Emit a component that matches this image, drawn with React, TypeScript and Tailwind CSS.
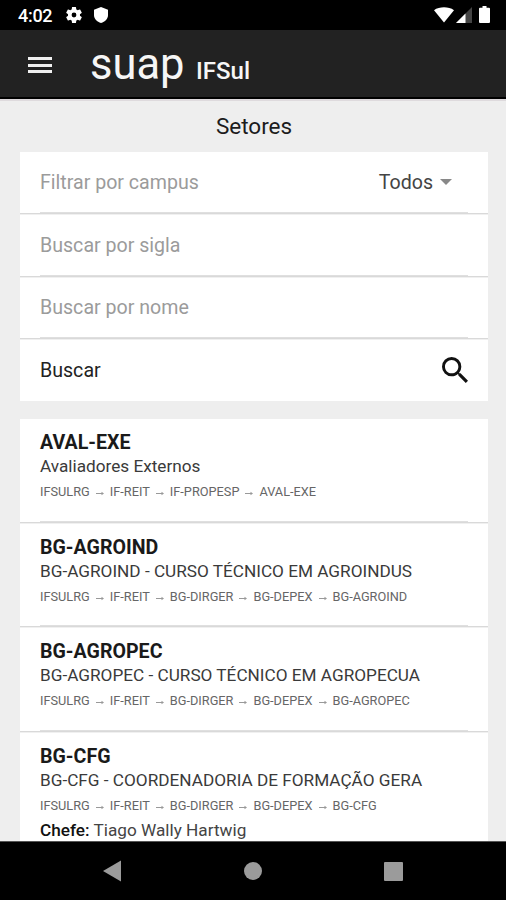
import type { ReactNode } from "react";

type Sector = {
  code: string;
  name: string;
  path: string[];
  chief?: string;
  height: string;
};

const sectors: Sector[] = [
  {
    code: "AVAL-EXE",
    name: "Avaliadores Externos",
    path: ["IFSULRG", "IF-REIT", "IF-PROPESP", "AVAL-EXE"],
    height: "h-[105px]",
  },
  {
    code: "BG-AGROIND",
    name: "BG-AGROIND - CURSO TÉCNICO EM AGROINDUS",
    path: ["IFSULRG", "IF-REIT", "BG-DIRGER", "BG-DEPEX", "BG-AGROIND"],
    height: "h-[104px]",
  },
  {
    code: "BG-AGROPEC",
    name: "BG-AGROPEC - CURSO TÉCNICO EM AGROPECUA",
    path: ["IFSULRG", "IF-REIT", "BG-DIRGER", "BG-DEPEX", "BG-AGROPEC"],
    height: "h-[105px]",
  },
  {
    code: "BG-CFG",
    name: "BG-CFG - COORDENADORIA DE FORMAÇÃO GERA",
    path: ["IFSULRG", "IF-REIT", "BG-DIRGER", "BG-DEPEX", "BG-CFG"],
    chief: "Tiago Wally Hartwig",
    height: "h-[130px]",
  },
];

function StatusBar() {
  return (
    <div className="flex h-[30px] shrink-0 items-center bg-black pr-[16px] pl-[18px] text-white">
      <span className="w-[48px] pt-[2px] text-[18px] leading-none font-medium tracking-[-0.3px]">4:02</span>
      <svg className="h-[16px] w-[16px]" viewBox="2 2 20 20" fill="#fff">
        <path d="M19.43 12.98c.04-.32.07-.64.07-.98s-.03-.66-.07-.98l2.11-1.65c.19-.15.24-.42.12-.64l-2-3.46c-.12-.22-.39-.3-.61-.22l-2.49 1c-.52-.4-1.08-.73-1.69-.98l-.38-2.65A.49.49 0 0 0 14 2h-4c-.25 0-.46.18-.49.42l-.38 2.65c-.61.25-1.17.59-1.69.98l-2.49-1c-.23-.09-.49 0-.61.22l-2 3.46c-.13.22-.07.49.12.64l2.11 1.65c-.04.32-.07.65-.07.98s.03.66.07.98l-2.11 1.65c-.19.15-.24.42-.12.64l2 3.46c.12.22.39.3.61.22l2.49-1c.52.4 1.08.73 1.69.98l.38 2.65c.03.24.24.42.49.42h4c.25 0 .46-.18.49-.42l.38-2.65c.61-.25 1.17-.59 1.69-.98l2.49 1c.23.09.49 0 .61-.22l2-3.46c.12-.22.07-.49-.12-.64l-2.11-1.65zM12 15a3 3 0 1 1 0-6 3 3 0 0 1 0 6z" />
      </svg>
      <svg className="ml-[12px] h-[16px] w-[14px]" viewBox="0 0 14 16" fill="#fff">
        <path d="M7 0 14 2.7V8c0 3.8-3 7-7 8-4-1-7-4.200-7-8V2.700z" />
      </svg>
      <svg className="ml-auto h-[16px] w-[20px]" viewBox="0 0 20 16" fill="#fff">
        <path d="M0 3.200C5.500-.6 14.500-.6 20 3.200L10 15.500z" />
      </svg>
      <svg className="ml-[2px] h-[16px] w-[16px]" viewBox="0 0 16 16">
        <path d="M16 0v16H0z" fill="#444" />
        <path d="M9.500 6.500V16H0z" fill="#fff" />
      </svg>
      <svg className="mb-px ml-[7px] h-[17px] w-[11px]" viewBox="0 0 11 17" fill="#fff">
        <path d="M3.500 0h4v1.800H10a1 1 0 0 1 1 1V16a1 1 0 0 1-1 1H1a1 1 0 0 1-1-1V2.800a1 1 0 0 1 1-1h2.500z" />
      </svg>
    </div>
  );
}

function AppBar() {
  return (
    <header className="flex h-[69px] shrink-0 border-b-2 border-black bg-[#222] text-[#f6f6f6]">
      <div className="mt-[27px] ml-[28px] flex h-[16px] w-[24px] flex-col justify-between">
        <span className="h-[3px] bg-[#f0f0f0]" />
        <span className="h-[3px] bg-[#f0f0f0]" />
        <span className="h-[3px] bg-[#f0f0f0]" />
      </div>
      <div className="ml-[38px] flex items-baseline whitespace-nowrap">
        <span className="w-[106px] text-[43.500px] leading-[69px]">suap</span>
        <span className="text-[24px] leading-none font-medium">IFSul</span>
      </div>
    </header>
  );
}

function Divider() {
  return (
    <div className="shrink-0">
      <div className="mx-5 h-px bg-[#dfdfdf]" />
      <div className="h-px bg-[#d9d9d9]" />
      <div className="h-px bg-[#f0f0f0]" />
    </div>
  );
}

function FilterRow({ height, children, last }: { height: string; children: ReactNode; last?: boolean }) {
  return (
    <div className={`flex flex-col ${height}`}>
      <div className="flex flex-1 items-center px-5 text-[19.600px] leading-none text-[#9b9b9b]">{children}</div>
      {!last && <Divider />}
    </div>
  );
}

function SectorRow({ sector, last }: { sector: Sector; last: boolean }) {
  return (
    <div className={`flex flex-col whitespace-nowrap ${sector.height}`}>
      <div className="flex-1 px-5 pt-[12px]">
        <h2 className="text-[19.600px] leading-[24px] font-bold text-[#1a1a1a]">{sector.code}</h2>
        <p className="text-[17.200px] leading-[22px] text-[#3a3a3a]">{sector.name}</p>
        <p className="mt-[6px] flex text-[12.750px] leading-[18px] text-[#666]">
          {sector.path.map((part, i) => (
            <span key={part} className="flex">
              {i > 0 && (
                <svg className="mx-[6px] mt-[8px] h-[5px] w-[8px]" viewBox="0 0 8 5" fill="#999">
                  <path d="M0 2h5.500V.7L8 2.500 5.500 4.300V3H0z" />
                </svg>
              )}
              {part}
            </span>
          ))}
        </p>
        {sector.chief && (
          <p className="mt-[4px] text-[17.200px] leading-[22px] text-[#444]">
            <span className="font-medium text-[#111]">Chefe:</span> {sector.chief}
          </p>
        )}
      </div>
      {!last && <Divider />}
    </div>
  );
}

function NavigationBar() {
  return (
    <nav className="flex h-[59px] shrink-0 items-center border-t border-[#555] bg-black pl-[103px]">
      <svg className="h-[22px] w-[18px]" viewBox="0 0 18 22">
        <path d="M18 .5v21L0 11z" fill="#9b9b9b" />
      </svg>
      <div className="ml-[123px] h-[18px] w-[18px] rounded-full bg-[#9b9b9b]" />
      <div className="ml-[122px] h-[19px] w-[19px] rounded-[1px] bg-[#9b9b9b]" />
    </nav>
  );
}

export default function App() {
  return (
    <div className="flex h-[900px] w-[506px] flex-col overflow-hidden bg-[#eee] font-['Roboto','Liberation_Sans',sans-serif]">
      <StatusBar />
      <AppBar />
      <main className="flex min-h-0 flex-1 flex-col overflow-hidden border-t-2 border-[#dedadd] px-[20px] pr-[18px]">
        <h1 className="h-[51px] shrink-0 pt-[1px] text-center text-[22.500px] leading-[48px] text-[#1c1c1c]">Setores</h1>
        <section className="mb-[18px] shrink-0 bg-white">
          <FilterRow height="h-[63px]">
            <span className="pt-[2px]">Filtrar por campus</span>
            <span className="ml-auto pt-[2px] text-[#444]">Todos</span>
            <span className="mr-[16px] ml-[7px] border-x-[6px] border-t-[6px] border-x-transparent border-t-[#888]" />
          </FilterRow>
          <FilterRow height="h-[63px]">
            <span className="pt-[2px]">Buscar por sigla</span>
          </FilterRow>
          <FilterRow height="h-[62px]">Buscar por nome</FilterRow>
          <FilterRow height="h-[61px]" last>
            <span className="text-[#222]">Buscar</span>
            <svg className="mb-[2px] ml-auto h-[26px] w-[26px]" viewBox="3 3 17.490 17.490" fill="#111">
              <path d="M15.500 14h-.79l-.28-.27A6.471 6.471 0 0 0 16 9.500 6.500 6.500 0 1 0 9.500 16c1.610 0 3.090-.59 4.230-1.570l.27.28v.79l5 4.990L20.490 19l-4.990-5zm-6 0C7.010 14 5 11.990 5 9.500S7.010 5 9.500 5 14 7.010 14 9.500 11.990 14 9.500 14z" />
            </svg>
          </FilterRow>
        </section>
        <section className="shrink-0 bg-white">
          {sectors.map((sector, i) => (
            <SectorRow key={sector.code} sector={sector} last={i === sectors.length - 1} />
          ))}
        </section>
      </main>
      <NavigationBar />
    </div>
  );
}
